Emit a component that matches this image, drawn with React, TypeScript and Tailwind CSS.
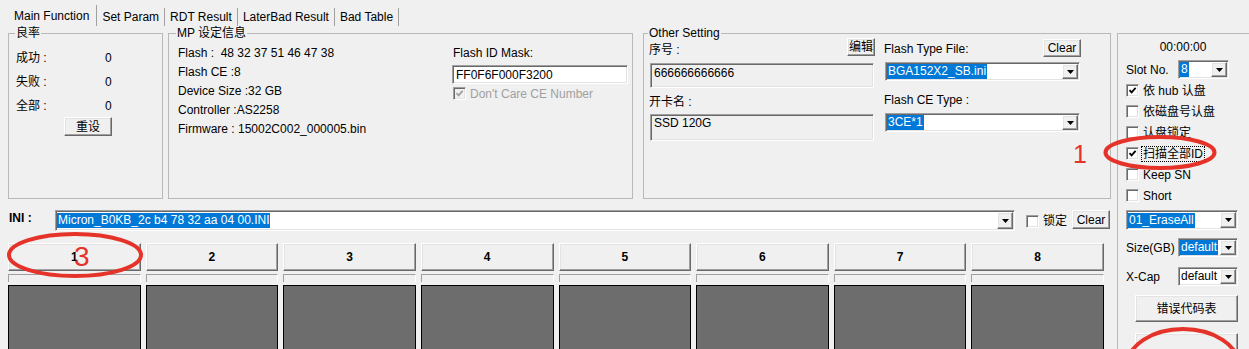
import React from "react";

const RAISED =
  "bg-[#f0f0f0] border border-t-white border-l-white border-r-[#696969] border-b-[#696969] shadow-[inset_-1px_-1px_0_#a0a0a0,inset_1px_1px_0_#e3e3e3]";
const SUNKEN =
  "border border-t-[#a0a0a0] border-l-[#a0a0a0] border-r-white border-b-white shadow-[inset_1px_1px_0_#696969,inset_-1px_-1px_0_#e3e3e3]";

function Arrow() {
  return (
    <svg width="7" height="4" viewBox="0 0 7 4">
      <path d="M0 0h7L3.5 4z" fill="#000" />
    </svg>
  );
}

function Combo({
  text,
  sel,
  className,
}: {
  text: string;
  sel?: boolean;
  className: string;
}) {
  return (
    <div className={`${SUNKEN} bg-white p-[1px] flex items-stretch shrink-0 ${className}`}>
      <div className="flex-1 flex items-center overflow-hidden whitespace-pre">
        <span
          className={
            sel
              ? "bg-[#0078d7] text-white px-[1px] leading-[15px]"
              : "px-[1px] leading-[15px]"
          }
        >
          {text}
        </span>
      </div>
      <div className={`${RAISED} w-[16px] flex items-center justify-center shrink-0`}>
        <Arrow />
      </div>
    </div>
  );
}

function Check({ checked, disabled }: { checked?: boolean; disabled?: boolean }) {
  return (
    <div
      className={`w-[13px] h-[13px] shrink-0 ${SUNKEN} ${
        disabled ? "bg-[#f0f0f0]" : "bg-white"
      } flex items-center justify-center`}
    >
      {checked && (
        <svg width="9" height="9" viewBox="0 0 9 9">
          <polyline
            points="1.5,4.2 3.6,6.4 7.6,1.8"
            fill="none"
            stroke={disabled ? "#a0a0a0" : "#000"}
            strokeWidth="1.8"
          />
        </svg>
      )}
    </div>
  );
}

export default function App() {
  const slots = [1, 2, 3, 4, 5, 6, 7, 8];
  const mpLines = [
    "Flash :  48 32 37 51 46 47 38",
    "Flash CE :8",
    "Device Size :32 GB",
    "Controller :AS2258",
    "Firmware : 15002C002_000005.bin",
  ];
  const checks: [string, boolean, boolean?][] = [
    ["依 hub 认盘", true],
    ["依磁盘号认盘", false],
    ["认盘锁定", false],
    ["扫描全部ID", true, true],
    ["Keep SN", false],
    ["Short", false],
  ];
  return (
    <div className="relative w-[1249px] h-[349px] overflow-hidden bg-[#f0f0f0] text-[12px] leading-[14px] text-black font-['Liberation_Sans','Noto_Sans_CJK_SC',sans-serif] flex items-start">
      {/* main tab area */}
      <div className="w-[1111px] shrink-0 flex flex-col">
        {/* tabs */}
        <div className="h-[26px] shrink-0 flex items-end pl-[8px]">
          <div className="h-[21px] pl-[6px] pr-[7px] border-r border-[#a0a0a0] flex items-center">
            Main Function
          </div>
          {["Set Param", "RDT Result", "LaterBad Result", "Bad Table"].map((t) => (
            <div
              key={t}
              className="h-[18px] px-[5px] border-r border-[#a0a0a0] flex items-center"
            >
              {t}
            </div>
          ))}
        </div>

        {/* group boxes */}
        <div className="flex h-[173px] shrink-0 pl-[8px]">
          <fieldset className="w-[155px] h-full border border-[#b9b9b9]">
            <legend className="ml-[6px] px-[1px] leading-[14px]">良率</legend>
            <div className="pl-[7px] pt-[6px]">
              {["成功", "失败", "全部"].map((l) => (
                <div key={l} className="h-[24px] flex items-center">
                  <span className="w-[89px]">{l} :</span>
                  <span>0</span>
                </div>
              ))}
              <div
                className={`${RAISED} ml-[48px] -mt-[1px] w-[48px] h-[19px] flex items-center justify-center`}
              >
                重设
              </div>
            </div>
          </fieldset>

          <fieldset className="ml-[5px] w-[465px] h-full border border-[#b9b9b9]">
            <legend className="ml-[7px] px-[1px] leading-[14px]">MP 设定信息</legend>
            <div className="flex pl-[9px] pt-[3px]">
              <div className="w-[274px]">
                {mpLines.map((l) => (
                  <div key={l} className="h-[19px] flex items-center whitespace-pre">
                    {l}
                  </div>
                ))}
              </div>
              <div className="w-[176px] flex flex-col">
                <div className="h-[19px] flex items-center pl-[1px]">Flash ID Mask:</div>
                <div
                  className={`${SUNKEN} bg-white mt-[3px] h-[19px] flex items-center pl-[3px]`}
                >
                  FF0F6F000F3200
                </div>
                <div className="h-[19px] flex items-center pl-[1px] gap-[4px] text-[#a0a0a0]">
                  <Check checked disabled />
                  Don't Care CE Number
                </div>
              </div>
            </div>
          </fieldset>

          <fieldset className="ml-[10px] w-[468px] h-full border border-[#b9b9b9]">
            <legend className="ml-[4px] px-[1px] leading-[14px]">Other Setting</legend>
            <div className="flex pl-[5px]">
              <div className="w-[226px] flex flex-col">
                <div className="flex items-start -mt-[2px]">
                  <span className="mt-[5px]">序号 :</span>
                  <div
                    className={`${RAISED} ml-auto w-[28px] h-[18px] flex items-center justify-center`}
                  >
                    编辑
                  </div>
                </div>
                <div className={`${SUNKEN} ml-[1px] mt-[6px] w-[224px] h-[25px] pl-[3px] pt-[2px]`}>
                  666666666666
                </div>
                <span className="mt-[7px]">开卡名 :</span>
                <div className={`${SUNKEN} ml-[1px] mt-[5px] w-[224px] h-[27px] pl-[3px] pt-[1px]`}>
                  SSD 120G
                </div>
              </div>
              <div className="ml-[9px] w-[197px] flex flex-col">
                <div className="flex items-start -mt-[1px]">
                  <span className="mt-[3px]">Flash Type File:</span>
                  <div
                    className={`${RAISED} ml-auto w-[38px] h-[18px] flex items-center justify-center`}
                  >
                    Clear
                  </div>
                </div>
                <Combo className="ml-[1px] mt-[5px] w-[195px] h-[19px]" text="BGA152X2_SB.ini" sel />
                <span className="mt-[12px]">Flash CE Type :</span>
                <Combo className="ml-[1px] mt-[6px] w-[195px] h-[19px]" text="3CE*1" sel />
              </div>
            </div>
          </fieldset>
        </div>

        {/* INI row */}
        <div className="mt-[11px] h-[21px] shrink-0 flex items-start pl-[9px] pr-[1px]">
          <span className="w-[46px] font-bold mt-[1px]">INI :</span>
          <Combo
            className="w-[960px] h-[21px]"
            text="Micron_B0KB_2c b4 78 32 aa 04 00.INI"
            sel
          />
          <div className="ml-[11px] mt-[4px] flex items-center">
            <Check />
            <span className="ml-[4px]">锁定</span>
          </div>
          <div
            className={`${RAISED} ml-auto w-[38px] h-[19px] flex items-center justify-center`}
          >
            Clear
          </div>
        </div>

        {/* slots */}
        <div className="mt-[12px] ml-[8px] w-[1096px] shrink-0 grid grid-cols-8 gap-x-[5px]">
          {slots.map((n) => (
            <div key={n} className="flex flex-col">
              <div className={`${RAISED} h-[28px] flex items-center justify-center font-bold`}>
                {n}
              </div>
              <div className="mt-[3px] h-[8px] border-t border-l border-[#a0a0a0] border-r border-r-white bg-[#f0f0f0]" />
              <div className="mt-[3px] h-[80px] bg-[#6d6d6d] border border-black" />
            </div>
          ))}
        </div>
      </div>

      {/* right panel */}
      <div className="ml-[6px] mt-[33px] w-[140px] h-[400px] shrink-0 border border-[#b9b9b9] flex flex-col pl-[8px]">
        <div className="mt-[6px] w-[114px] text-center">00:00:00</div>
        <div className="mt-[6px] h-[19px] flex items-center">
          <span className="w-[52px]">Slot No.</span>
          <Combo className="w-[51px] h-[19px]" text="8" sel />
        </div>
        <div className="mt-[1px] flex flex-col">
          {checks.map(([t, c, f]) => (
            <div key={t} className="h-[21px] flex items-center">
              <Check checked={c} />
              <span
                className={
                  f
                    ? "ml-[2px] px-[1px] border border-dotted border-black leading-[14px]"
                    : "ml-[3px] border border-transparent"
                }
              >
                {t}
              </span>
            </div>
          ))}
        </div>
        <Combo className="mt-[4px] w-[112px] h-[20px]" text="01_EraseAll" sel />
        <div className="mt-[8px] h-[19px] flex items-center">
          <span className="w-[52px]">Size(GB)</span>
          <Combo className="w-[60px] h-[19px]" text="default" sel />
        </div>
        <div className="mt-[10px] h-[19px] flex items-center">
          <span className="w-[52px]">X-Cap</span>
          <Combo className="w-[60px] h-[19px]" text="default" />
        </div>
        <div
          className={`${RAISED} mt-[9px] ml-[9px] w-[103px] h-[27px] shrink-0 flex items-center justify-center`}
        >
          错误代码表
        </div>
        <div className={`${RAISED} mt-[11px] ml-[9px] w-[103px] h-[27px] shrink-0`} />
      </div>

      {/* red annotations */}
      <svg
        className="absolute left-0 top-0 pointer-events-none"
        width="1249"
        height="349"
        viewBox="0 0 1249 349"
      >
        <ellipse cx="75" cy="255" rx="66" ry="21" fill="none" stroke="#e5332a" strokeWidth="4" />
        <ellipse cx="1160" cy="152.5" rx="54.5" ry="15.5" fill="none" stroke="#e5332a" strokeWidth="4" />
        <ellipse cx="1183" cy="366" rx="56" ry="37" fill="none" stroke="#e5332a" strokeWidth="4" />
      </svg>
      <span className="absolute left-[1073px] top-[142px] text-[25px] leading-[25px] text-[#e5332a] pointer-events-none">
        1
      </span>
      <span className="absolute left-[74px] top-[243px] text-[28px] leading-[28px] text-[#e5332a] pointer-events-none">
        3
      </span>
    </div>
  );
}
